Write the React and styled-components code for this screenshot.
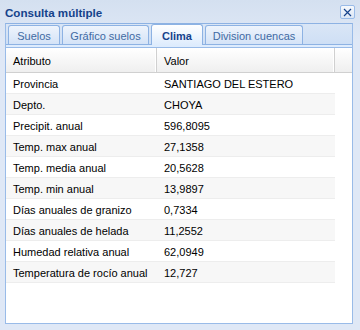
import React from 'react'
import styled, { createGlobalStyle } from 'styled-components'

const GlobalStyle = createGlobalStyle`
  html, body {
    margin: 0;
    padding: 0;
    background: #dfe8f6;
  }
  body {
    font-family: "Liberation Sans", Arial, sans-serif;
    font-size: 11px;
  }
`;

const Window = styled.div`
  width: 360px;
  height: 330px;
  box-sizing: border-box;
  padding: 0 7px 6px 5px;
  display: flex;
  flex-direction: column;
  background: linear-gradient(#d4e0f0, #dfe8f6 40px);
`;

const Header = styled.div`
  height: 23px;
  display: flex;
  align-items: center;
  justify-content: space-between;
`;

const Title = styled.span`
  font-weight: bold;
  font-size: 11.6px;
  color: #15428b;
  margin-top: 1px;
`;

const CloseButton = styled.div`
  width: 13px;
  height: 12px;
  margin-right: -2px;
  margin-top: 1px;
  border: 1px solid #99bbe8;
  border-radius: 2px;
  background: linear-gradient(#f6f9fd, #dbe6f5);
  display: flex;
  align-items: center;
  justify-content: center;
`;

const TabPanel = styled.div`
  flex: 1;
  display: flex;
  flex-direction: column;
  border: 1px solid #99bbe8;
  border-top: 1px solid #8db2e3;
  background: #cedff5;
`;

const TabStrip = styled.div`
  height: 20px;
  display: flex;
  align-items: flex-end;
  gap: 2px;
  padding-left: 2px;
  background: linear-gradient(#dae6f6, #cedff5);
  border-bottom: 1px solid #8db2e3;
`;

const Tab = styled.div`
  width: ${p => p.$w}px;
  height: ${p => (p.$active ? 21 : 19)}px;
  box-sizing: border-box;
  display: flex;
  align-items: center;
  justify-content: center;
  border: 1px solid #8db2e3;
  border-bottom: none;
  border-radius: 3px 3px 0 0;
  margin-bottom: ${p => (p.$active ? -1 : 0)}px;
  background: ${p =>
    p.$active
      ? 'linear-gradient(#ffffff, #deecfd)'
      : 'linear-gradient(#eef4fc, #d4e3f7)'};
  color: ${p => (p.$active ? '#15428b' : '#416aa3')};
  font-weight: ${p => (p.$active ? 'bold' : 'normal')};
  font-size: 11px;
  padding-top: 1px;
`;

const Spacer = styled.div`
  height: 2px;
  background: #deecfd;
  border-bottom: 1px solid #99bbe8;
`;

const Body = styled.div`
  flex: 1;
  background: #ffffff;
`;

const GridHeader = styled.div`
  display: flex;
  height: 24px;
  background: linear-gradient(#ffffff, #efefef);
  border-bottom: 1px solid #d0d0d0;
`;

const HeaderCell = styled.div`
  width: ${p => p.$w}px;
  box-sizing: border-box;
  padding: 1px 0 0 7px;
  display: flex;
  align-items: center;
  color: #000;
  border-right: 1px solid #d0d0d0;
  box-shadow: inset -1px 0 0 #ffffff;
`;

const HeaderFiller = styled.div`
  flex: 1;
`;

const Row = styled.div`
  width: 329px;
  height: 21px;
  box-sizing: border-box;
  display: flex;
  background: ${p => (p.$alt ? '#f7f7f7' : '#ffffff')};
  border-bottom: 1px solid #ededed;
`;

const Cell = styled.div`
  width: ${p => p.$w}px;
  box-sizing: border-box;
  padding: 1px 0 0 7px;
  display: flex;
  align-items: center;
  color: #000;
  white-space: nowrap;
`;

const rows = [
  ['Provincia', 'SANTIAGO DEL ESTERO'],
  ['Depto.', 'CHOYA'],
  ['Precipit. anual', '596,8095'],
  ['Temp. max anual', '27,1358'],
  ['Temp. media anual', '20,5628'],
  ['Temp. min anual', '13,9897'],
  ['Días anuales de granizo', '0,7334'],
  ['Días anuales de helada', '11,2552'],
  ['Humedad relativa anual', '62,0949'],
  ['Temperatura de rocío anual', '12,727'],
];

const tabs = [
  { label: 'Suelos', w: 52 },
  { label: 'Gráfico suelos', w: 87 },
  { label: 'Clima', w: 52, active: true },
  { label: 'Division cuencas', w: 98 },
];

const App = () => {
  return (
    <>
      <GlobalStyle />
      <Window>
        <Header>
          <Title>Consulta múltiple</Title>
          <CloseButton>
            <svg width="9" height="9" viewBox="0 0 9 9">
              <path d="M1 1L8 8M8 1L1 8" stroke="#15428b" strokeWidth="1.2" />
            </svg>
          </CloseButton>
        </Header>
        <TabPanel>
          <TabStrip>
            {tabs.map(t => (
              <Tab key={t.label} $w={t.w} $active={t.active}>
                {t.label}
              </Tab>
            ))}
          </TabStrip>
          <Spacer />
          <Body>
            <GridHeader>
              <HeaderCell $w={151}>Atributo</HeaderCell>
              <HeaderCell $w={178}>Valor</HeaderCell>
              <HeaderFiller />
            </GridHeader>
            {rows.map(([k, v], i) => (
              <Row key={k} $alt={i % 2 === 1}>
                <Cell $w={151}>{k}</Cell>
                <Cell $w={178}>{v}</Cell>
              </Row>
            ))}
          </Body>
        </TabPanel>
      </Window>
    </>
  )
}

export default App
